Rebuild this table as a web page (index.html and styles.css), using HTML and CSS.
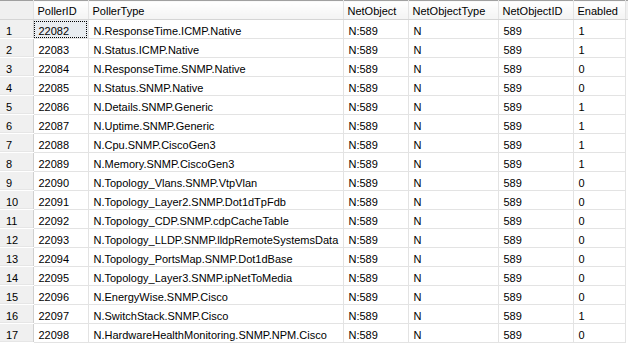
FILE: index.html
```html
<!DOCTYPE html>
<html>
<head>
<meta charset="utf-8">
<link rel="stylesheet" href="styles.css">
</head>
<body>
<table class="grid">
<colgroup>
<col class="c-rh"><col class="c-id"><col class="c-type"><col class="c-obj"><col class="c-otype"><col class="c-oid"><col class="c-en"><col class="c-fill">
</colgroup>
<thead>
<tr><th class="corner"></th><th>PollerID</th><th>PollerType</th><th>NetObject</th><th>NetObjectType</th><th>NetObjectID</th><th>Enabled</th><th class="fill"></th></tr>
</thead>
<tbody>
<tr><td class="rh">1</td><td class="focus"><span>22082</span></td><td>N.ResponseTime.ICMP.Native</td><td>N:589</td><td>N</td><td>589</td><td>1</td><td class="fill"></td></tr>
<tr><td class="rh">2</td><td>22083</td><td>N.Status.ICMP.Native</td><td>N:589</td><td>N</td><td>589</td><td>1</td><td class="fill"></td></tr>
<tr><td class="rh">3</td><td>22084</td><td>N.ResponseTime.SNMP.Native</td><td>N:589</td><td>N</td><td>589</td><td>0</td><td class="fill"></td></tr>
<tr><td class="rh">4</td><td>22085</td><td>N.Status.SNMP.Native</td><td>N:589</td><td>N</td><td>589</td><td>0</td><td class="fill"></td></tr>
<tr><td class="rh">5</td><td>22086</td><td>N.Details.SNMP.Generic</td><td>N:589</td><td>N</td><td>589</td><td>1</td><td class="fill"></td></tr>
<tr><td class="rh">6</td><td>22087</td><td>N.Uptime.SNMP.Generic</td><td>N:589</td><td>N</td><td>589</td><td>1</td><td class="fill"></td></tr>
<tr><td class="rh">7</td><td>22088</td><td>N.Cpu.SNMP.CiscoGen3</td><td>N:589</td><td>N</td><td>589</td><td>1</td><td class="fill"></td></tr>
<tr><td class="rh">8</td><td>22089</td><td>N.Memory.SNMP.CiscoGen3</td><td>N:589</td><td>N</td><td>589</td><td>1</td><td class="fill"></td></tr>
<tr><td class="rh">9</td><td>22090</td><td>N.Topology_Vlans.SNMP.VtpVlan</td><td>N:589</td><td>N</td><td>589</td><td>0</td><td class="fill"></td></tr>
<tr><td class="rh">10</td><td>22091</td><td>N.Topology_Layer2.SNMP.Dot1dTpFdb</td><td>N:589</td><td>N</td><td>589</td><td>0</td><td class="fill"></td></tr>
<tr><td class="rh">11</td><td>22092</td><td>N.Topology_CDP.SNMP.cdpCacheTable</td><td>N:589</td><td>N</td><td>589</td><td>0</td><td class="fill"></td></tr>
<tr><td class="rh">12</td><td>22093</td><td>N.Topology_LLDP.SNMP.lldpRemoteSystemsData</td><td>N:589</td><td>N</td><td>589</td><td>0</td><td class="fill"></td></tr>
<tr><td class="rh">13</td><td>22094</td><td>N.Topology_PortsMap.SNMP.Dot1dBase</td><td>N:589</td><td>N</td><td>589</td><td>0</td><td class="fill"></td></tr>
<tr><td class="rh">14</td><td>22095</td><td>N.Topology_Layer3.SNMP.ipNetToMedia</td><td>N:589</td><td>N</td><td>589</td><td>0</td><td class="fill"></td></tr>
<tr><td class="rh">15</td><td>22096</td><td>N.EnergyWise.SNMP.Cisco</td><td>N:589</td><td>N</td><td>589</td><td>0</td><td class="fill"></td></tr>
<tr><td class="rh">16</td><td>22097</td><td>N.SwitchStack.SNMP.Cisco</td><td>N:589</td><td>N</td><td>589</td><td>1</td><td class="fill"></td></tr>
<tr><td class="rh">17</td><td>22098</td><td>N.HardwareHealthMonitoring.SNMP.NPM.Cisco</td><td>N:589</td><td>N</td><td>589</td><td>0</td><td class="fill"></td></tr>
</tbody>
</table>
</body>
</html>
```

FILE: styles.css
```css
html, body {
  margin: 0;
  padding: 0;
  background: #ffffff;
}
body {
  width: 628px;
  height: 343px;
  overflow: hidden;
  font-family: "Liberation Sans", Arial, sans-serif;
  font-size: 11px;
  line-height: 13px;
  color: #000000;
}
.grid {
  border-collapse: collapse;
  table-layout: fixed;
  width: 628px;
}
.c-rh { width: 33px; }
.c-id { width: 55px; }
.c-type { width: 255px; }
.c-obj { width: 65px; }
.c-otype { width: 90px; }
.c-oid { width: 75px; }
.c-en { width: 52px; }
.c-fill { width: 3px; }
.grid thead tr { height: 19px; }
.grid tbody tr { height: 19px; }
.grid th {
  padding: 4px 0 0 4px;
  vertical-align: top;
  font-weight: normal;
  text-align: left;
  white-space: nowrap;
  overflow: hidden;
  background: linear-gradient(#ffffff, #f3f3f3);
  border-top: 1px solid #a0a0a0;
  border-bottom: 1px solid #d5d5d5;
  border-right: 1px solid #e3e3e3;
}
.grid th.corner {
  background: #f0f0f0;
}
.grid th.fill {
  border-right: none;
  background: #f0f0f0;
}
.grid td {
  padding: 5px 0 0 5px;
  vertical-align: top;
  white-space: nowrap;
  overflow: hidden;
  border-right: 1px solid #e3e3e3;
  border-bottom: 1px solid #e3e3e3;
}
.grid td.rh {
  background: #f0f0f0;
  padding-left: 6px;
  border-right: 1px solid #d0d0d0;
  border-bottom: 1px solid #ffffff;
  box-shadow: inset 0 -1px 0 #e6e6e6;
}
.grid td.fill {
  border: none;
  background: #ffffff;
}
.grid td.focus {
  background: #e8ecf0;
  outline: 1px dotted #000000;
  outline-offset: -2px;
}
```
